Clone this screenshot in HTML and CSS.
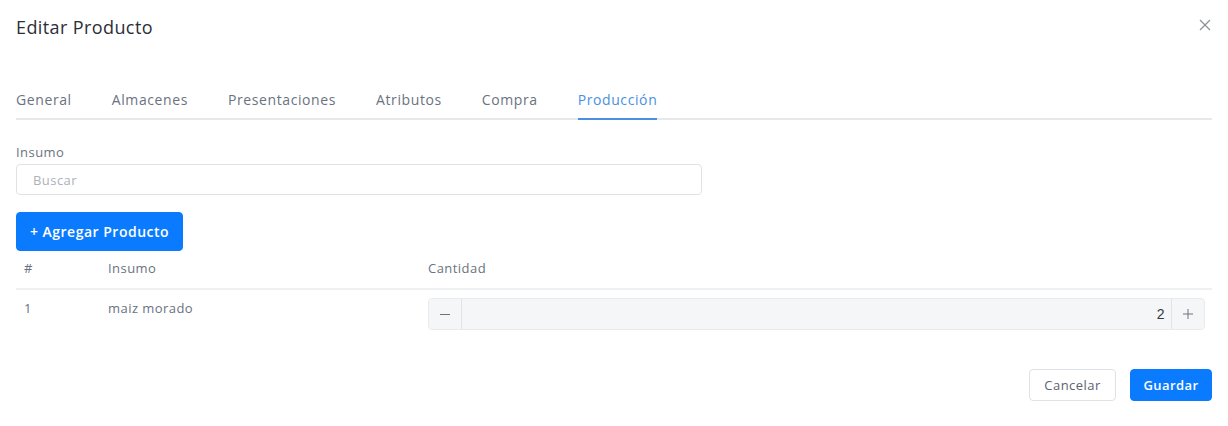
FILE: index.html
```html
<!DOCTYPE html>
<html lang="es">
<head>
<meta charset="utf-8">
<title>Editar Producto</title>
<link rel="stylesheet" href="styles.css">
</head>
<body>
<div class="modal">
  <div class="modal-header">
    <h1 class="modal-title">Editar Producto</h1>
    <button class="close" aria-label="Cerrar">
      <svg width="12" height="12" viewBox="0 0 12 12"><path d="M1 1L11 11M11 1L1 11" stroke="#8a8f98" stroke-width="1.2" fill="none"/></svg>
    </button>
  </div>
  <div class="modal-body">
    <ul class="tabs">
      <li class="tab">General</li>
      <li class="tab">Almacenes</li>
      <li class="tab">Presentaciones</li>
      <li class="tab">Atributos</li>
      <li class="tab">Compra</li>
      <li class="tab active">Producción</li>
    </ul>
    <div class="field">
      <label class="label">Insumo</label>
      <input class="input" type="text" placeholder="Buscar">
    </div>
    <button class="btn btn-primary btn-add">+ Agregar Producto</button>
    <table class="table">
      <thead>
        <tr><th class="c-num">#</th><th class="c-name">Insumo</th><th class="c-qty">Cantidad</th></tr>
      </thead>
      <tbody>
        <tr>
          <td class="c-num">1</td>
          <td class="c-name">maiz morado</td>
          <td class="c-qty">
            <div class="stepper">
              <button class="step">
                <svg width="12" height="12" viewBox="0 0 12 12"><path d="M1 6.5H11" stroke="#6c7380" stroke-width="1"/></svg>
              </button>
              <div class="step-value">2</div>
              <button class="step">
                <svg width="12" height="12" viewBox="0 0 12 12"><path d="M1 6H11M6 1V11" stroke="#6c7380" stroke-width="1"/></svg>
              </button>
            </div>
          </td>
        </tr>
      </tbody>
    </table>
  </div>
  <div class="modal-footer">
    <button class="btn btn-light">Cancelar</button>
    <button class="btn btn-primary btn-save">Guardar</button>
  </div>
</div>
</body>
</html>
```
FILE: styles.css
```css
* { box-sizing: border-box; }
html, body { margin: 0; padding: 0; background: #fff; }
body {
  font-family: "Open Sans", "Noto Sans", sans-serif;
  color: #343a40;
  width: 1228px;
  height: 426px;
  overflow: hidden;
  letter-spacing: 0.45px;
}
.modal { padding: 0 16px; }
.modal-header {
  display: flex;
  align-items: center;
  justify-content: space-between;
  height: 54px;
}
.modal-title {
  margin: 0;
  font-size: 18px;
  font-weight: 400;
  color: #2b2f36;
  letter-spacing: 0.4px;
}
.close {
  border: 0;
  background: none;
  padding: 0;
  margin-right: 1px;
  display: flex;
  margin-top: -4px;
}
.modal-body { padding-top: 28px; }
.tabs {
  list-style: none;
  margin: 0;
  padding: 0;
  display: flex;
  gap: 40px;
  border-bottom: 2px solid #e6e8eb;
  height: 38px;
}
.tab {
  font-size: 14px;
  color: #6b7280;
  line-height: 36px;
  height: 38px;
  letter-spacing: 0.6px;
}
.tab.active {
  color: #4a90e2;
  border-bottom: 2px solid #4a90e2;
}
.field { margin-top: 24px; }
.label {
  display: block;
  font-size: 13px;
  color: #6b7280;
  line-height: 16px;
  margin-bottom: 4px;
}
.input {
  display: block;
  width: 686px;
  height: 31px;
  border: 1px solid #dfe2e6;
  border-radius: 4px;
  padding: 0 16px;
  font-family: inherit;
  font-size: 13px;
  letter-spacing: 0.45px;
  color: #495057;
  outline: none;
}
.input::placeholder { color: #adb1b8; }
.btn {
  font-family: inherit;
  letter-spacing: inherit;
  border-radius: 4px;
  cursor: pointer;
}
.btn-primary {
  background: #0a7bff;
  border: 1px solid #0a7bff;
  color: #fff;
}
.btn-add {
  margin-top: 17px;
  height: 39px;
  width: 167px;
  font-size: 14px;
  font-weight: 600;
  letter-spacing: 0.5px;
  padding: 0;
}
.table {
  width: 100%;
  border-collapse: collapse;
  table-layout: fixed;
}
.table th {
  font-weight: 400;
  font-size: 13px;
  color: #6b7280;
  text-align: left;
  height: 38px;
  line-height: 20px;
  vertical-align: top;
  border-bottom: 2px solid #eef0f2;
  padding: 7px 8px 0;
}
.table td {
  font-size: 13px;
  color: #6b7280;
  padding: 8px 8px 0;
  vertical-align: top;
  line-height: 20px;
}
.c-num { width: 84px; }
.c-name { width: 324px; }
.table td.c-qty { padding: 8px 7px 0 4px; }
.table th.c-qty { padding-left: 4px; }
.stepper {
  display: flex;
  height: 32px;
  border: 1px solid #e8eaee;
  border-radius: 4px;
  background: #f5f6f8;
  overflow: hidden;
}
.step {
  width: 32px;
  border: 0;
  background: #f5f6f8;
  display: flex;
  align-items: center;
  justify-content: center;
  padding: 0;
}
.step-value {
  flex: 1;
  border-left: 1px solid #e2e4e8;
  border-right: 1px solid #e2e4e8;
  text-align: right;
  padding-right: 6px;
  line-height: 30px;
  font-size: 14px;
  color: #343a40;
  font-family: "Liberation Sans", Arial, sans-serif;
}
.modal-footer {
  display: flex;
  justify-content: flex-end;
  gap: 14px;
  margin-top: 39px;
}
.btn-light {
  background: #fff;
  border: 1px solid #dfe2e6;
  color: #5b6270;
  height: 32px;
  width: 87px;
  font-size: 13px;
}
.btn-save {
  height: 32px;
  width: 82px;
  font-size: 13px;
  font-weight: 600;
}
```
